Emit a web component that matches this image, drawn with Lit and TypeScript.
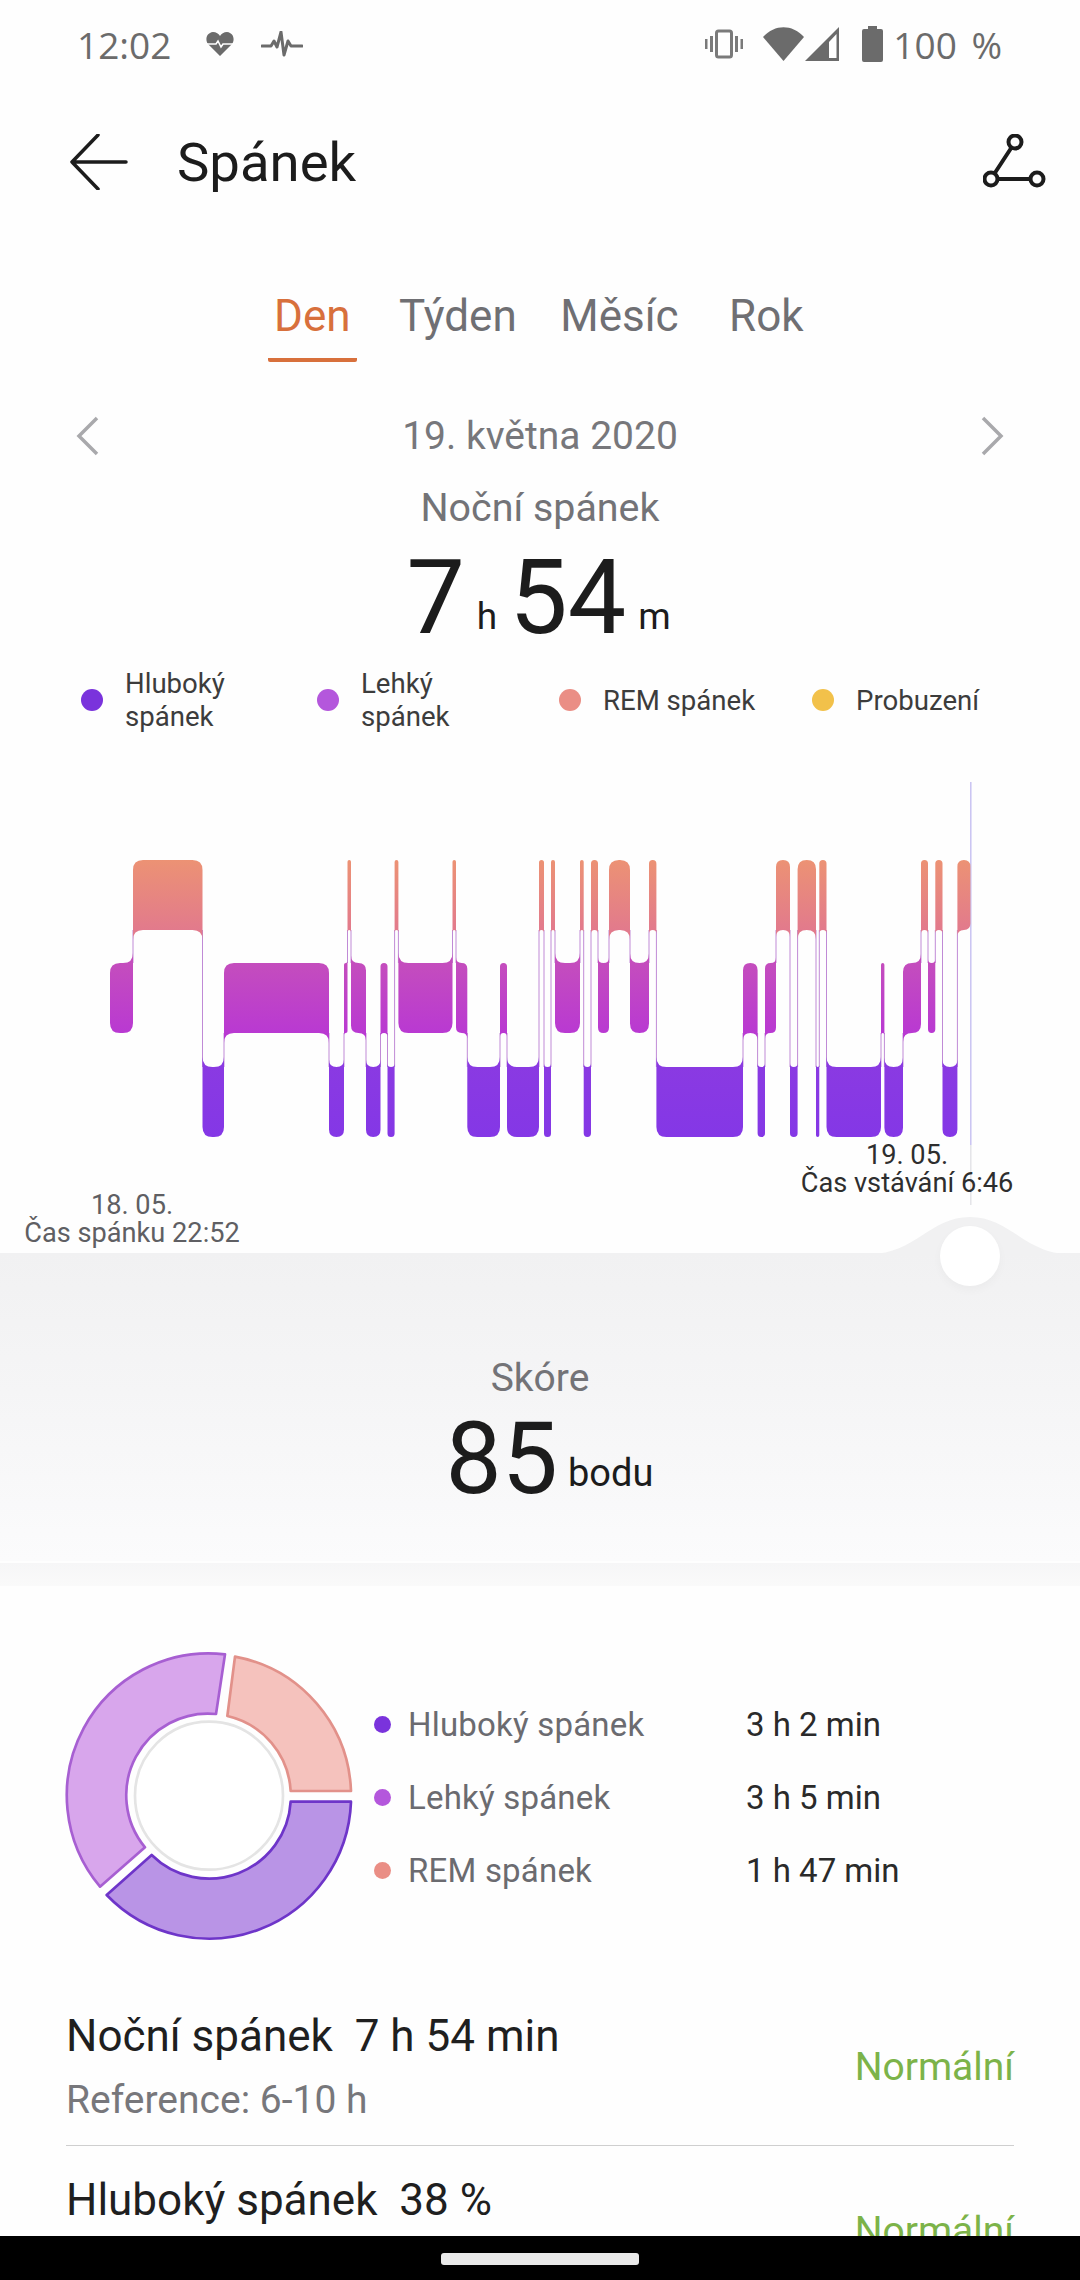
import { LitElement, html, css, svg } from "lit";
import { customElement } from "lit/decorators.js";

type Seg = [number, number, number];
// level: 0 rem, 1 light, 2 deep; [x0, x1, level]
const edges: [number, number][] = [
  [110,1],[133,0],[202.5,2],[224,1],[329,2],[344,1],[347.5,0],[351,1],[366,2],[380.5,1],[387.5,2],[394.6,0],[398.4,1],
  [452.5,0],[456,1],[467.3,2],[500,1],[507,2],[539,0],[544,2],[551,0],[555,1],[580,0],[583.7,2],[591,0],[598,1],[609,0],
  [630,1],[649,0],[656.4,2],[743,1],[757.6,2],[765,1],[776,0],[790,2],[797.6,0],[816,2],[819.3,0],[826.5,2],[881,1],
  [884.4,2],[903,1],[921,0],[928,1],[935.3,0],[942.5,2],[957.4,0],[970.4,-1],
];
const segs: Seg[] = edges.slice(0, -1).map((e, i) => [e[0], edges[i + 1][0], e[1]]);
const TOP = [860, 963, 1067];
const BOT = [930, 1033, 1137];
const R = 10;

function blockPath(i: number): string {
  const [x0, x1, lv] = segs[i];
  const y0 = TOP[lv], y1 = BOT[lv];
  const r = Math.min(R, (x1 - x0) / 2);
  const prev = i > 0 ? segs[i - 1][2] : -1;
  const next = i < segs.length - 1 ? segs[i + 1][2] : -1;
  let d = "";
  if (prev !== -1 && prev < lv) d += `M${x0} ${y0 - r}Q${x0} ${y0} ${x0 + r} ${y0}`;
  else d += `M${x0} ${y0 + r}Q${x0} ${y0} ${x0 + r} ${y0}`;
  if (next !== -1 && next < lv) d += `L${x1 - r} ${y0}Q${x1} ${y0} ${x1} ${y0 - r}`;
  else d += `L${x1 - r} ${y0}Q${x1} ${y0} ${x1} ${y0 + r}`;
  if (next !== -1 && next > lv) d += `L${x1} ${y1 + r}Q${x1} ${y1} ${x1 - r} ${y1}`;
  else d += `L${x1} ${y1 - r}Q${x1} ${y1} ${x1 - r} ${y1}`;
  if (prev !== -1 && prev > lv) d += `L${x0 + r} ${y1}Q${x0} ${y1} ${x0} ${y1 + r}`;
  else d += `L${x0 + r} ${y1}Q${x0} ${y1} ${x0} ${y1 - r}`;
  return d + "Z";
}

const connectors = segs.slice(1).map((s, k) => {
  const a = segs[k][2], b = s[2];
  const hi = Math.min(a, b), lo = Math.max(a, b);
  return { x: s[0], y0: BOT[hi], y1: TOP[lo] };
});

@customElement("status-bar")
class StatusBar extends LitElement {
  static styles = css`
    :host { display: flex; align-items: center; height: 88px; padding: 0 78px 0 77px; color: #6b6b6b; font: 500 37px/1 "Open Sans", sans-serif; }
    .l { display: flex; align-items: center; gap: 35px; flex: 1; }
    .ics { display: flex; align-items: center; gap: 27px; }
    .r { display: flex; align-items: center; gap: 0; }
    .pct { margin-left: 10px; word-spacing: 5px; }
    .vib { margin-right: 20px; }
    .sig { margin-left: 1px; }
    .bat { margin-left: 22px; }
    svg { display: block; fill: #6b6b6b; }
  `;
  render() {
    return html`
      <div class="l">
        <span>12:02</span>
        <div class="ics">
          <svg width="28" height="26" viewBox="0 0 28 26"><path d="M14 25 2 13C-1 9 0 2 7 1c3 0 6 2 7 4 1-2 4-4 7-4 7 1 8 8 5 12z"/><path d="M0 13h10l2-3 3 6 2-3h11" fill="none" stroke="#fff" stroke-width="1.6"/></svg>
          <svg width="42" height="26" viewBox="0 0 42 26"><path d="M1 15h9l3-5 3 6 4-15 3 23 4-14 3 5h11" fill="none" stroke="#6b6b6b" stroke-width="3" stroke-linecap="round" stroke-linejoin="round"/></svg>
        </div>
      </div>
      <div class="r">
        <svg class="vib" width="38" height="30" viewBox="0 0 38 30"><rect x="11.500" y="2" width="15" height="26" rx="2" fill="none" stroke="#7a7a7a" stroke-width="3"/><rect x="5" y="7" width="3" height="16" fill="#7a7a7a"/><rect x="30" y="7" width="3" height="16" fill="#7a7a7a"/><rect x="0" y="10" width="2.500" height="10" fill="#7a7a7a"/><rect x="35.500" y="10" width="2.500" height="10" fill="#7a7a7a"/></svg>
        <svg width="41" height="34" viewBox="0 0 41 34"><path d="M0 10C12-3 29-3 41 10L20.500 34z"/></svg>
        <svg class="sig" width="35" height="34" viewBox="0 0 35 34"><path d="M34 0V34H0z"/><path d="M24 15 31.500 7V31H24z" fill="#fff"/></svg>
        <svg class="bat" width="21" height="36" viewBox="0 0 21 36"><path d="M6 0h9v3h4q2 0 2 2v29q0 2-2 2H2q-2 0-2-2V5q0-2 2-2h4z"/></svg>
        <span class="pct">100 %</span>
      </div>`;
  }
}

@customElement("app-root")
export class AppRoot extends LitElement {
  static styles = css`
    :host { display: block; position: relative; width: 1080px; height: 2280px; overflow: hidden; background: #fefefe; font-family: Roboto, sans-serif; color: #1c1c1c; }
    svg { display: block; }
    .appbar { display: flex; align-items: center; height: 148px; padding: 0 33px 0 70px; box-sizing: border-box; }
    .appbar h1 { flex: 1; margin: 0 0 0 49px; font: 400 54.5px/1 Roboto, sans-serif; color: #1c1c1c; }
    .tabs { display: flex; gap: 36.5px; height: 126px; padding: 55px 0 0 268px; box-sizing: border-box; font-size: 44px; line-height: 50px; color: #6f6f73; }
    .tab { padding: 0 6px; height: 71px; box-sizing: border-box; }
    .tab:nth-child(3) { margin-left: -5px; }
    .tab:nth-child(4) { margin-left: 2px; }
    .tab.on { color: #d8703c; border-bottom: 4px solid #d8703c; border-radius: 0 0 2px 2px; }
    .date { display: flex; align-items: center; justify-content: space-between; height: 64px; margin-top: 42px; padding: 0 75px; font-size: 39px; color: #77777b; }
    .night { margin-top: 15px; height: 50px; line-height: 50px; text-align: center; font-size: 39.4px; color: #737377; }
    .big { height: 110px; margin-top: 9px; display: flex; align-items: baseline; justify-content: center; line-height: 112px; padding-right: 3px; font-size: 104px; color: #1c1c1c; }
    .big small { font-size: 37px; margin: 0 12px; position: relative; top: -4px; }
    .big small:last-child { margin-right: 0; }
    .legend { display: grid; grid-template-columns: 236px 242px 253px auto; align-items: center; height: 96px; padding-left: 81px; font-size: 27.6px; line-height: 33px; color: #3c3c3c; }
    .li { display: flex; align-items: center; gap: 22px; }
    .dot { width: 22px; height: 22px; border-radius: 50%; flex: none; }
    .stage { position: relative; height: 505px; }
    .stage > svg { position: absolute; left: 0; top: -748px; }
    .lab { position: absolute; font-size: 27.2px; line-height: 28px; text-align: center; white-space: nowrap; }
    .lab.a { left: 23px; width: 218px; top: 443px; color: #5f5f63; }
    .lab.b { left: 798px; width: 218px; top: 393px; color: #2e2e2e; }
    .score { position: relative; height: 308px; background: linear-gradient(#f1f1f2, #f5f5f6 45%, #fbfbfc); text-align: center; box-sizing: border-box; padding-top: 100px; }
    .bump { position: absolute; left: 870px; top: -40px; }
    .knob { position: absolute; left: 940px; top: -27px; width: 60px; height: 60px; border-radius: 50%; background: #fff; box-shadow: 0 4px 10px rgba(0,0,0,.03); }
    .skore { font-size: 39px; line-height: 50px; color: #737377; }
    .sc { display: flex; align-items: baseline; justify-content: center; height: 112px; line-height: 112px; padding-left: 19px; font-size: 100px; color: #1c1c1c; }
    .sc small { font-size: 38px; margin-left: 10px; position: relative; top: -7px; }
    .band { margin-top: 2px; height: 23px; background: linear-gradient(#f6f6f7, #fafafa); }
    .stats { height: 396px; position: relative; display: flex; padding-left: 40px; }
    .donut { flex: none; margin-top: 34px; }
    .rows { display: grid; grid-template-columns: 372px auto; grid-auto-rows: 73px; align-items: center; margin: 102px 0 0 -6px; font-size: 33px; height: 219px; }
    .rows .n { display: flex; align-items: center; gap: 17px; color: #6b6b70; letter-spacing: .2px; }
    .rows .v { color: #2a2a2a; }
    .d2 { width: 17px; height: 17px; border-radius: 50%; flex: none; }
    .list { padding: 0 66px; }
    .row { display: flex; justify-content: space-between; align-items: center; padding: 29px 0 23px; border-bottom: 1.500px solid #cfcfcf; }
    .row:last-child { border: 0; }
    .row .txt { min-height: 111px; }
    .t { font-size: 44px; line-height: 50px; color: #1f1f1f; }
    .s { font-size: 39px; line-height: 44px; margin-top: 17px; color: #77777b; }
    .ok { font-size: 39px; color: #7cb349; }
    .nav { position: absolute; left: 0; right: 0; bottom: 0; height: 44px; background: #000; display: flex; align-items: center; justify-content: center; }
    .pill { width: 198px; height: 12px; border-radius: 3px; background: #e9e9e9; margin-top: 1px; }
  `;

  private chart() {
    return svg`
      <defs>
        <linearGradient id="g0" gradientUnits="userSpaceOnUse" x1="0" y1="860" x2="0" y2="930"><stop offset="0" stop-color="#ec9274"/><stop offset="1" stop-color="#e27a8c"/></linearGradient>
        <linearGradient id="g1" gradientUnits="userSpaceOnUse" x1="0" y1="963" x2="0" y2="1033"><stop offset="0" stop-color="#c44dbd"/><stop offset="1" stop-color="#b939d2"/></linearGradient>
        <linearGradient id="g2" gradientUnits="userSpaceOnUse" x1="0" y1="1067" x2="0" y2="1137"><stop offset="0" stop-color="#8a3ae2"/><stop offset="1" stop-color="#8437e6"/></linearGradient>
      </defs>
      <line x1="970.800" y1="782" x2="970.800" y2="1145" stroke="#c9c3f2" stroke-width="1.500"/>
      <line x1="970.800" y1="1145" x2="970.800" y2="1205" stroke="#e4e4e8" stroke-width="1.500"/>
      ${connectors.map((c) => svg`<line x1=${c.x} x2=${c.x} y1=${c.y0} y2=${c.y1} stroke="#c08ad6" stroke-width="1"/>`)}
      ${segs.map((s, i) => svg`<path d=${blockPath(i)} fill="url(#g${s[2]})"/>`)}
    `;
  }

  render() {
    return html`
      <status-bar></status-bar>
      <div class="appbar">
        <svg width="58" height="56" viewBox="0 0 58 56"><path d="M28 1 2 28l26 27M2 28h54" fill="none" stroke="#1c1c1c" stroke-width="3.500" stroke-linecap="round" stroke-linejoin="round"/></svg>
        <h1>Spánek</h1>
        <svg width="64" height="56" viewBox="0 0 64 56"><g fill="none" stroke="#1c1c1c" stroke-width="4"><circle cx="32" cy="8" r="6.500"/><circle cx="8" cy="45" r="6.500"/><circle cx="54" cy="45" r="6.500"/><path d="M28.500 13.500 11.500 39.500M14.500 45H47.500"/></g></svg>
      </div>
      <div class="tabs">
        <div class="tab on">Den</div><div class="tab">Týden</div><div class="tab">Měsíc</div><div class="tab">Rok</div>
      </div>
      <div class="date">
        <svg width="26" height="40" viewBox="0 0 26 40"><path d="M22 2 4 20l18 18" fill="none" stroke="#a9a9ac" stroke-width="3.500"/></svg>
        <span>19. května 2020</span>
        <svg width="26" height="40" viewBox="0 0 26 40"><path d="M4 2l18 18L4 38" fill="none" stroke="#a9a9ac" stroke-width="3.500"/></svg>
      </div>
      <div class="night">Noční spánek</div>
      <div class="big">7<small>h</small>54<small>m</small></div>
      <div class="legend">
        <div class="li"><span class="dot" style="background:#7a33dc"></span><span>Hluboký<br />spánek</span></div>
        <div class="li"><span class="dot" style="background:#b457dc"></span><span>Lehký<br />spánek</span></div>
        <div class="li"><span class="dot" style="background:#ea8e85"></span><span>REM spánek</span></div>
        <div class="li"><span class="dot" style="background:#f2c14a"></span><span>Probuzení</span></div>
      </div>
      <div class="stage">
        <svg width="1080" height="1300" viewBox="0 0 1080 1300">${this.chart()}</svg>
        <div class="lab a">18. 05.<br />Čas spánku 22:52</div>
        <div class="lab b">19. 05.<br />Čas vstávání 6:46</div>
      </div>
      <div class="score">
        <svg class="bump" width="200" height="42" viewBox="0 0 200 42"><path d="M0 41C45 41 60 4 100 4s55 37 100 37v1H0z" fill="#f1f1f2"/></svg>
        <div class="knob"></div>
        <div class="skore">Skóre</div>
        <div class="sc">85<small>bodu</small></div>
      </div>
      <div class="band"></div>
      <div class="stats">
        <svg class="donut" width="340" height="340" viewBox="0 0 1020 1020">
          <circle cx="507" cy="527" r="222" fill="#fff" stroke="#e4e4e4" stroke-width="8"/>
          <g stroke-width="8" stroke-linejoin="round">
            <path d="M585 110A426 426 0 0 1 933 513L752 513A245 245 0 0 0 562 288Z" fill="#f5c2bd" stroke="#e2918a"/>
            <path d="M933 545A426 426 0 0 1 200 825L335 705A245 245 0 0 0 752 545Z" fill="#b994e6" stroke="#6e35c9"/>
            <path d="M180 800A426 426 0 0 1 555 103L528 282A245 245 0 0 0 315 682Z" fill="#d8a6ec" stroke="#a75fd2"/>
          </g>
        </svg>
        <div class="rows">
          <div class="n"><span class="d2" style="background:#7a33dc"></span>Hluboký spánek</div><div class="v">3 h 2 min</div>
          <div class="n"><span class="d2" style="background:#b457dc"></span>Lehký spánek</div><div class="v">3 h 5 min</div>
          <div class="n"><span class="d2" style="background:#ea8e85"></span>REM spánek</div><div class="v">1 h 47 min</div>
        </div>
      </div>
      <div class="list">
        <div class="row"><div class="txt"><div class="t">Noční spánek&nbsp; 7 h 54 min</div><div class="s">Reference: 6-10 h</div></div><div class="ok">Normální</div></div>
        <div class="row"><div class="txt"><div class="t">Hluboký spánek&nbsp; 38 %</div></div><div class="ok">Normální</div></div>
      </div>
      <div class="nav"><div class="pill"></div></div>
    `;
  }
}
void StatusBar;
